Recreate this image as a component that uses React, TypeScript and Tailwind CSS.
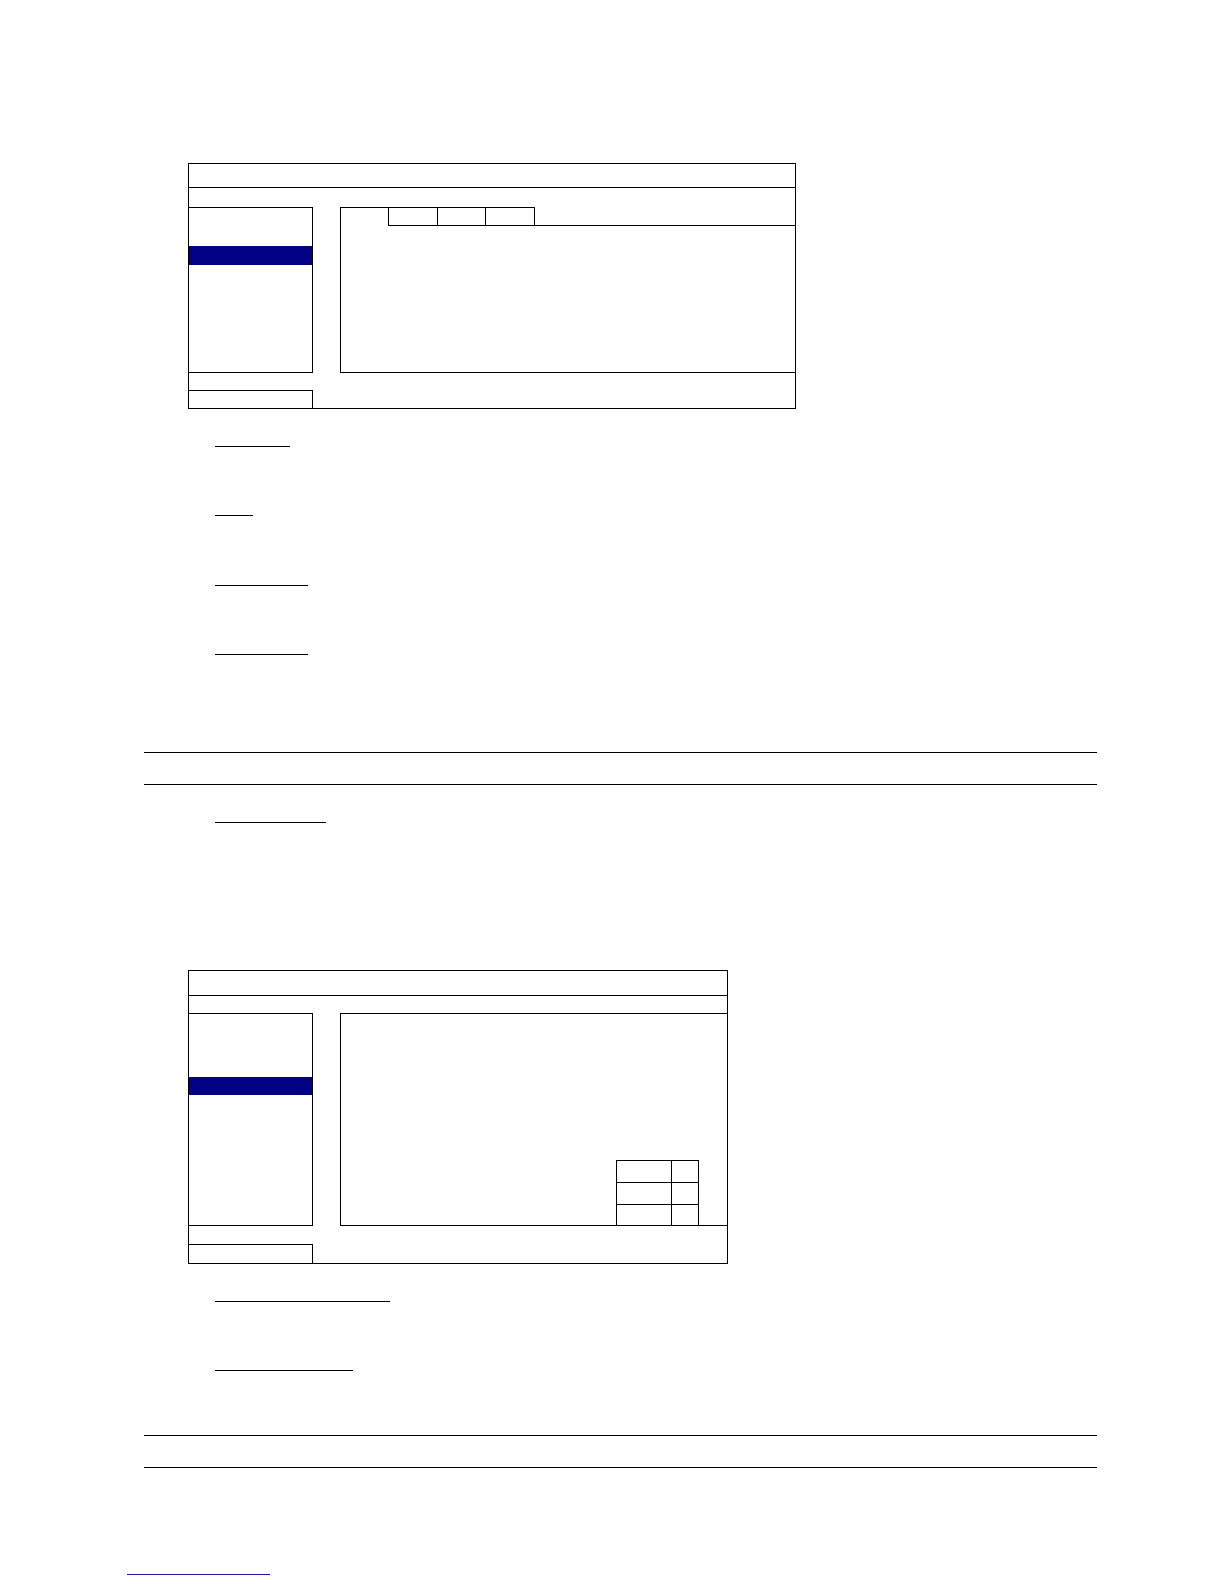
import React from "react";

function Underline({ mt, w }: { mt: string; w: string }) {
  return <div className={`${mt} ${w} ml-[215px] h-px bg-black`} />;
}

export default function App() {
  return (
    <div className="w-[1224px] h-[1584px] bg-white flex flex-col overflow-hidden font-['Liberation_Sans',sans-serif]">
      {/* Screen 1 */}
      <div className="mt-[163px] ml-[188px] w-[608px] h-[246px] border border-black flex flex-col">
        <div className="h-[24px] border-b border-black" />
        <div className="mt-[19px] h-[166px] flex">
          <div className="w-[124px] h-full border-t border-r border-b border-black flex flex-col">
            <div className="mt-[38px] h-[19px] bg-[#000080]" />
          </div>
          <div className="ml-[27px] flex-1 h-full border-l border-b border-black flex flex-col">
            <div className="flex h-[19px]">
              <div className="w-[47px] border-t border-black" />
              <div className="w-[49px] border-t border-l border-b border-black" />
              <div className="w-[48px] border-t border-l border-b border-black" />
              <div className="w-[50px] border border-black" />
              <div className="flex-1 border-b border-black" />
            </div>
          </div>
        </div>
        <div className="mt-[17px] w-[124px] h-[18px] border-t border-r border-black" />
      </div>

      <Underline mt="mt-[37px]" w="w-[75px]" />
      <Underline mt="mt-[68px]" w="w-[38px]" />
      <Underline mt="mt-[69px]" w="w-[93px]" />
      <Underline mt="mt-[68px]" w="w-[93px]" />

      <div className="mt-[97px] ml-[144px] w-[953px] h-px bg-black" />
      <div className="mt-[31px] ml-[144px] w-[953px] h-px bg-black" />

      <Underline mt="mt-[37px]" w="w-[111px]" />

      {/* Screen 2 */}
      <div className="mt-[147px] ml-[188px] w-[540px] h-[294px] border border-black flex flex-col">
        <div className="h-[25px] border-b border-black" />
        <div className="mt-[17px] h-[213px] flex">
          <div className="w-[124px] h-full border-t border-r border-b border-black flex flex-col">
            <div className="mt-[63px] h-[18px] bg-[#000080]" />
          </div>
          <div className="ml-[27px] flex-1 h-full border-t border-l border-b border-black flex flex-col justify-end items-end">
            <div className="mr-[28px] w-[83px] border-x border-t border-black flex flex-col">
              <div className="h-[22px] border-b border-black flex">
                <div className="w-[55px] border-r border-black" />
                <div className="flex-1" />
              </div>
              <div className="h-[22px] border-b border-black flex">
                <div className="w-[55px] border-r border-black" />
                <div className="flex-1" />
              </div>
              <div className="h-[20px] flex">
                <div className="w-[55px] border-r border-black" />
                <div className="flex-1" />
              </div>
            </div>
          </div>
        </div>
        <div className="mt-[18px] w-[124px] h-[19px] border-t border-r border-black" />
      </div>

      <Underline mt="mt-[37px]" w="w-[175px]" />
      <Underline mt="mt-[68px]" w="w-[138px]" />

      <div className="mt-[64px] ml-[144px] w-[953px] h-px bg-black" />
      <div className="mt-[31px] ml-[144px] w-[953px] h-px bg-black" />

      <div className="mt-[106px] ml-[127px] w-[143px] h-px bg-[#1c1ca8]" />
    </div>
  );
}
